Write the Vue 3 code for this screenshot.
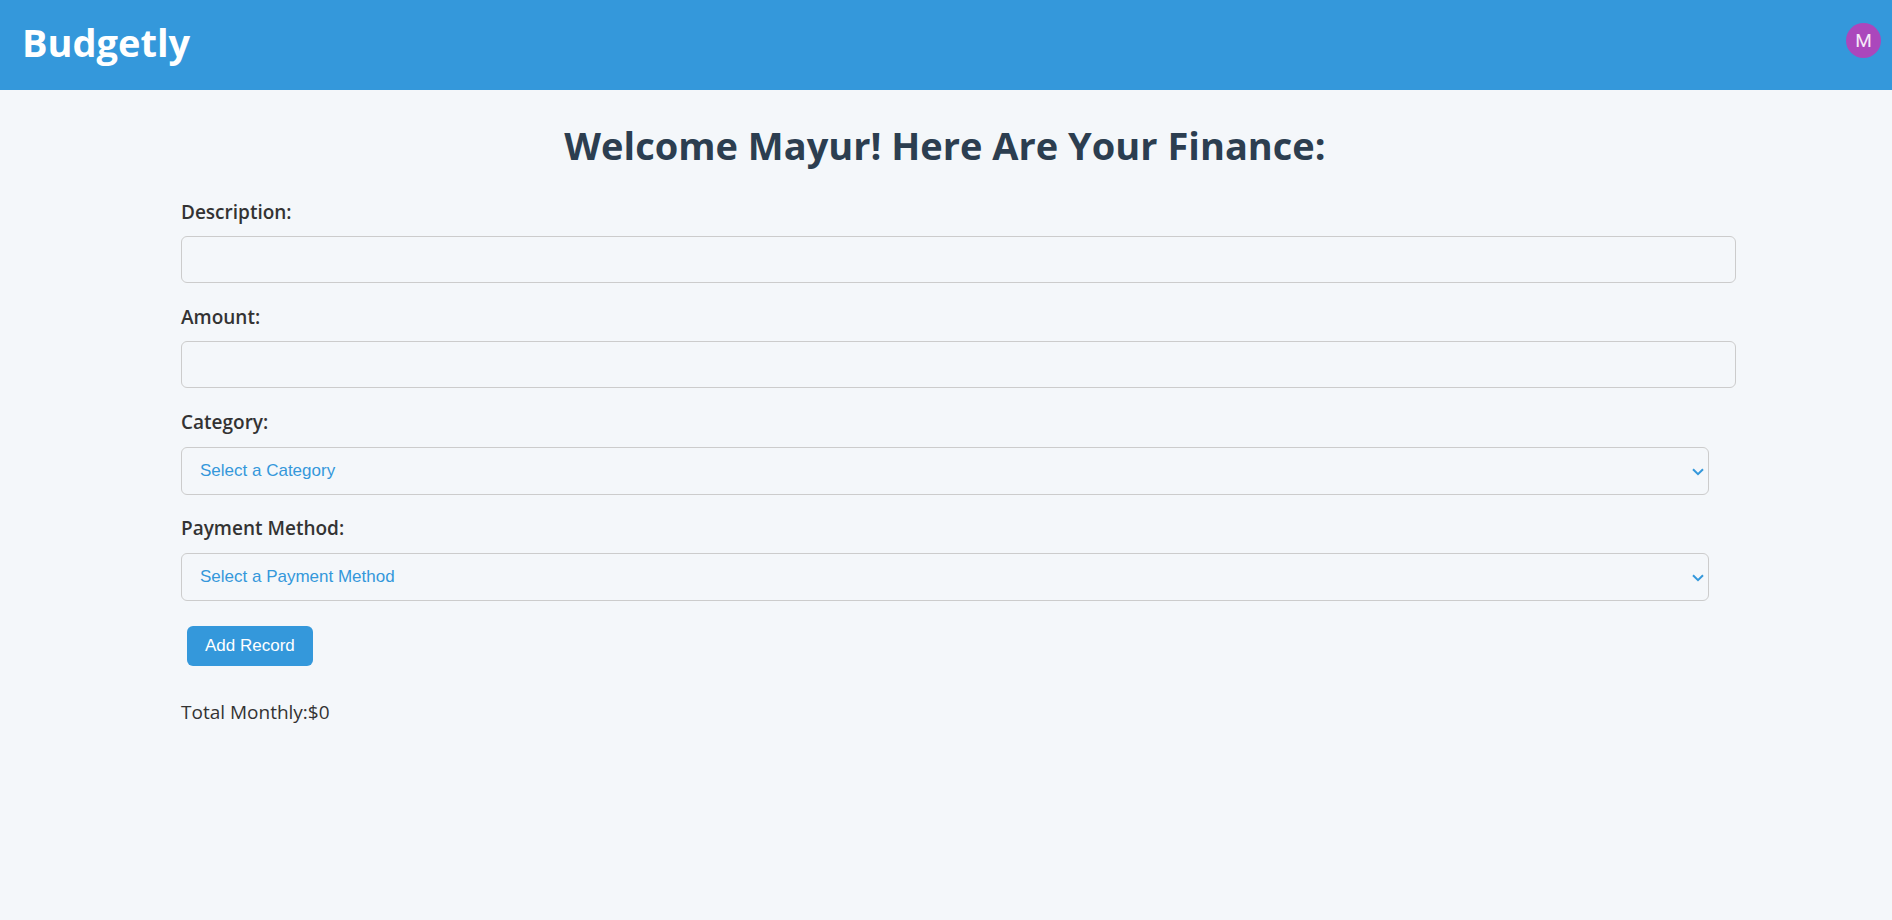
<script setup>
import { ref } from 'vue'

const description = ref('')
const amount = ref('')
const category = ref('')
const method = ref('')
const total = ref(0)

const categories = ['Food', 'Rent', 'Salary', 'Utilities', 'Entertainment', 'Other']
const methods = ['Credit Card', 'Cash', 'Bank Transfer']

function addRecord() {
  total.value += Number(amount.value) || 0
  description.value = ''
  amount.value = ''
  category.value = ''
  method.value = ''
}
</script>

<template>
  <div class="page">
    <header class="navbar">
      <a class="brand" href="#">Budgetly</a>
      <button class="avatar" type="button" aria-label="Open user menu">M</button>
    </header>

    <main class="dashboard">
      <h1 class="title">Welcome Mayur! Here Are Your Finance:</h1>

      <form @submit.prevent="addRecord">
        <div class="field">
          <label for="description">Description:</label>
          <input id="description" v-model="description" type="text" />
        </div>
        <div class="field">
          <label for="amount">Amount:</label>
          <input id="amount" v-model="amount" type="text" inputmode="decimal" />
        </div>
        <div class="field choice">
          <label for="category">Category:</label>
          <div class="picker">
            <select id="category" v-model="category">
              <option value="">Select a Category</option>
              <option v-for="c in categories" :key="c" :value="c">{{ c }}</option>
            </select>
            <svg class="chevron" viewBox="0 0 12 8" aria-hidden="true">
              <path d="M1 1.2 6 6.2 11 1.2" />
            </svg>
          </div>
        </div>
        <div class="field choice">
          <label for="method">Payment Method:</label>
          <div class="picker">
            <select id="method" v-model="method">
              <option value="">Select a Payment Method</option>
              <option v-for="m in methods" :key="m" :value="m">{{ m }}</option>
            </select>
            <svg class="chevron" viewBox="0 0 12 8" aria-hidden="true">
              <path d="M1 1.2 6 6.2 11 1.2" />
            </svg>
          </div>
        </div>
        <button class="submit" type="submit">Add Record</button>
      </form>

      <div class="total">Total Monthly:${{ total }}</div>
    </main>
  </div>
</template>

<style>
body {
  margin: 0;
  background: #f4f7fa;
}
</style>

<style scoped>
.page {
  min-height: 100vh;
  background: #f4f7fa;
  color: #333;
  font-family: "Segoe UI", "Open Sans", "Noto Sans", sans-serif;
  font-size: 19px;
  line-height: 32px;
}

.navbar {
  display: flex;
  align-items: flex-start;
  justify-content: space-between;
  box-sizing: border-box;
  min-height: 90px;
  padding: 12px 11px 12px 22px;
  background: #3498db;
}

.brand {
  color: #fff;
  font-size: 38px;
  font-weight: 700;
  line-height: 60px;
  text-decoration: none;
}

.avatar {
  width: 35px;
  height: 35px;
  margin-top: 11px;
  padding: 0;
  border: 0;
  border-radius: 50%;
  background: #ab47bc;
  color: #f6e9f8;
  font-family: Roboto, sans-serif;
  font-size: 19px;
  line-height: 35px;
  text-align: center;
  cursor: pointer;
}

.dashboard {
  margin: 0 183px 0 181px;
  padding-top: 23px;
}

.title {
  margin: 0 0 19px;
  color: #2c3e50;
  font-size: 38px;
  font-weight: 700;
  line-height: 64px;
  text-align: center;
}

.field {
  display: flex;
  flex-direction: column;
  gap: 8px;
  margin-bottom: 18px;
}

.choice {
  gap: 9px;
  margin-bottom: 17px;
}

label {
  font-weight: 600;
}

input,
select {
  box-sizing: border-box;
  padding: 13px 18px 15px;
  border: 1px solid #ccc;
  border-radius: 6px;
  background: transparent;
  color: #3498db;
  font-family: Arial, "Liberation Sans", sans-serif;
  font-size: 17px;
}

input {
  width: calc(100% + 27px);
  height: 47px;
}

.picker {
  position: relative;
  display: flex;
}

select {
  width: 100%;
  height: 48px;
  appearance: none;
}

.chevron {
  position: absolute;
  top: 21px;
  right: 5px;
  width: 12px;
  height: 8px;
  fill: none;
  stroke: #3498db;
  stroke-width: 2;
  pointer-events: none;
}

.submit {
  margin: 8px 6px 0;
  padding: 11px 18px;
  border: 0;
  border-radius: 6px;
  background: #3498db;
  color: #fff;
  font-family: Arial, "Liberation Sans", sans-serif;
  font-size: 17px;
  line-height: 18px;
  cursor: pointer;
}

.total {
  margin-top: 30px;
}
</style>
